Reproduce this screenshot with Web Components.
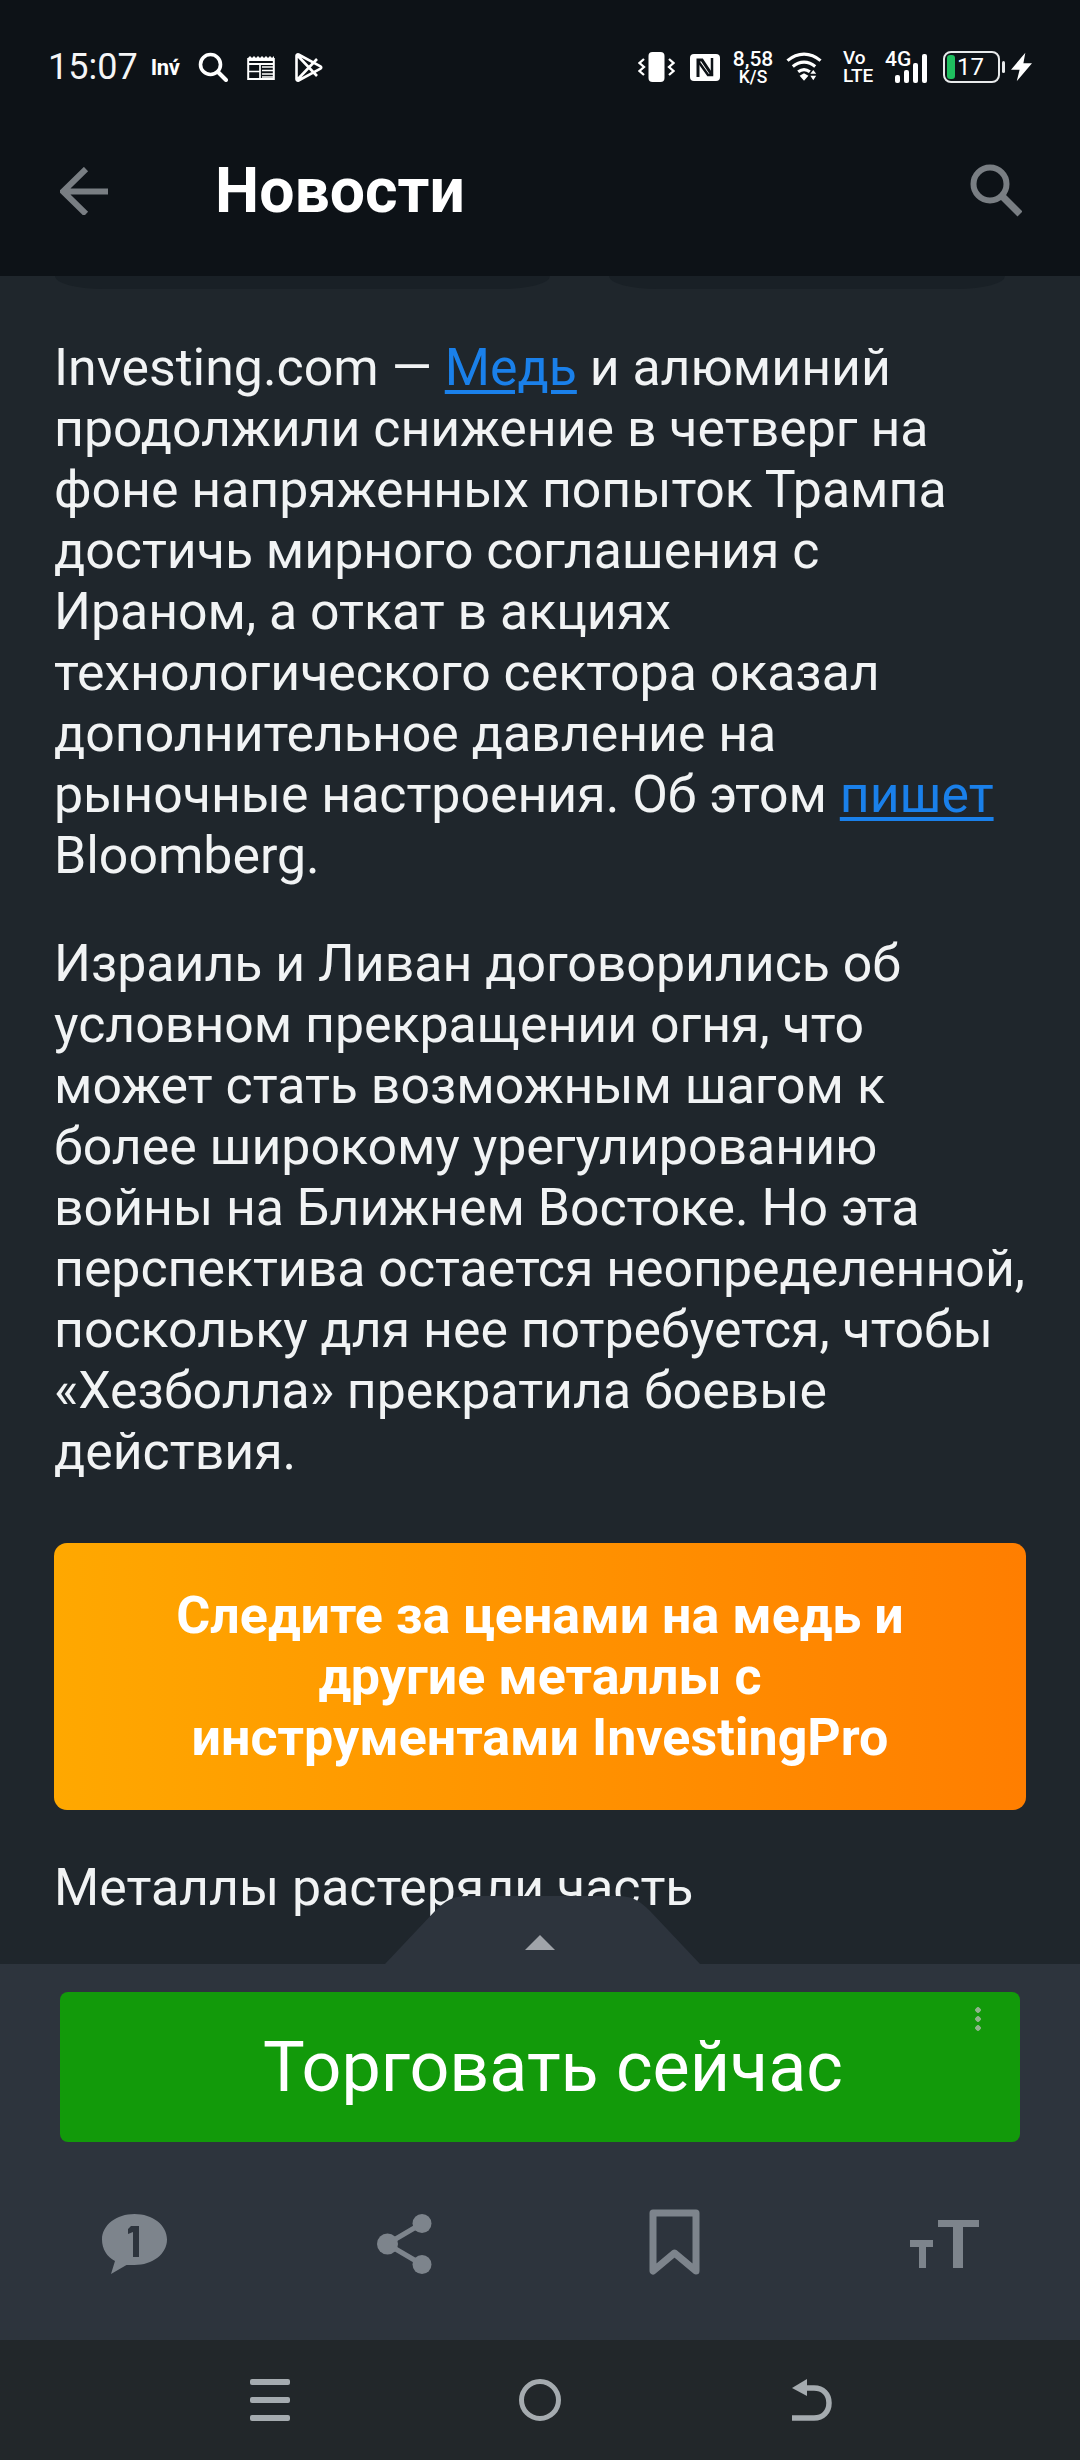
<!DOCTYPE html>
<html lang="ru">
<head>
<meta charset="utf-8">
<title>Новости</title>
<style>
  html, body { margin: 0; padding: 0; background: #1f262c; }
  body { width: 1080px; height: 2460px; overflow: hidden; font-family: Roboto, "Liberation Sans", sans-serif; }
  news-screen { height: 2460px; }
</style>
</head>
<body>
<news-screen>
  <status-bar slot="top"></status-bar>
  <app-header slot="top" title="Новости"></app-header>
  <article-body>
    <p>Investing.com — <news-link>Медь</news-link> и алюминий продолжили снижение в четверг на фоне напряженных попыток Трампа достичь мирного соглашения с Ираном, а откат в акциях технологического сектора оказал дополнительное давление на рыночные настроения. Об этом <news-link>пишет</news-link> Bloomberg.</p>
    <p>Израиль и Ливан договорились об условном прекращении огня, что может стать возможным шагом к более широкому урегулированию войны на Ближнем Востоке. Но эта перспектива остается неопределенной, поскольку для нее потребуется, чтобы «Хезболла» прекратила боевые действия.</p>
    <promo-banner>Следите за ценами на медь и другие металлы с инструментами InvestingPro</promo-banner>
    <p>Металлы растеряли часть</p>
  </article-body>
  <action-panel slot="bottom"></action-panel>
  <nav-bar slot="bottom"></nav-bar>
</news-screen>

<script>
function makeEl(name, css, html) {
  customElements.define(name, class extends HTMLElement {
    constructor() {
      super();
      this.attachShadow({ mode: "open" });
    }
    connectedCallback() {
      this.shadowRoot.innerHTML = "<style>" + css + "</style>" + html(this);
    }
  });
}

makeEl("news-screen", `
  :host { display: flex; flex-direction: column; width: 1080px; position: relative; overflow: hidden; background: #1f262c; }
  .mid { flex: 1; min-height: 0; overflow: hidden; }
`, () => `<slot name="top"></slot><div class="mid"><slot></slot></div><slot name="bottom"></slot>`);

makeEl("status-bar", `
  :host { display: flex; align-items: center; height: 132px; box-sizing: border-box; padding: 2px 48px 0 48px; background: #0d1217; color: #fff; font-family: Roboto, sans-serif; }
  .time { font-size: 36px; color: #f4f5f6; margin-right: 13px; }
  .inv { font-size: 22px; font-weight: 700; width: 31px; margin-right: 16px; letter-spacing: -.3px; white-space: nowrap; }
  svg { display: block; flex: none; }
  .left { display: flex; align-items: center; }
  .right { display: flex; align-items: center; margin-left: auto; }
  .stack { display: flex; flex-direction: column; align-items: center; font-weight: 500; line-height: 1; }
  .speed b { font-size: 21px; font-weight: 500; line-height: 20px; }
  .speed span { font-size: 17.5px; line-height: 16px; }
  .volte { font-size: 19px; line-height: 18px; }
  .volte span { align-self: flex-start; }
  .g { font-size: 21px; line-height: 1; font-weight: 500; position: absolute; left: 0; top: -2px; }
  .sig { position: relative; width: 42px; height: 32px; margin-right: 16px; }
  .bat { position: relative; width: 57px; height: 32px; box-sizing: border-box; border: 2px solid #e8eaeb; border-radius: 8px; font-size: 24px; line-height: 28px; padding-left: 12px; }
  .bat i { position: absolute; left: 2px; top: 2px; width: 8px; height: 24px; border-radius: 3px; background: #1fbf5f; }
`, () => `
  <div class="left">
    <span class="time">15:07</span>
    <span class="inv">Inv́</span>
    <svg width="30" height="30" viewBox="0 0 30 30" style="margin-right:19px"><circle cx="12.500" cy="12.500" r="10" fill="none" stroke="#fff" stroke-width="3.600"/><path d="M20 20l8 8" stroke="#fff" stroke-width="4" stroke-linecap="round"/></svg>
    <svg width="28" height="25" viewBox="0 0 28 25" style="margin-right:20px"><path d="M1 3l2-2 2 2 2-2 2 2 2-2 2 2 2-2 2 2 2-2 2 2 2-2 2 2 2-2v5H1z" fill="#fff"/><rect x="1.200" y="4" width="25.600" height="20" fill="none" stroke="#fff" stroke-width="2"/><path d="M1 9h26" stroke="#fff" stroke-width="2"/><path d="M15 12h11M15 15.500h11M15 19h11M15 22h11M13 10v14M2 16.500h11" stroke="#fff" stroke-width="1.700"/></svg>
    <svg width="28" height="31" viewBox="0 0 28 31"><path d="M3.500 2.500L25.500 14.300c1 .6 1 1.800 0 2.400L3.500 28.500c-1 .5-2-.1-2-1.200V3.700c0-1.100 1-1.700 2-1.200zM2 3l20 21M2 28l20-21" fill="none" stroke="#fff" stroke-width="2.600" stroke-linejoin="round"/></svg>
  </div>
  <div class="right">
    <svg width="37" height="30" viewBox="0 0 37 30" style="margin-right:15px"><rect x="10.500" y="0" width="16" height="30" rx="4" fill="#fff"/><path d="M6 7L1.500 11 6 15 1.500 19 6 23M31 7l4.500 4L31 15l4.500 4L31 23" fill="none" stroke="#fff" stroke-width="2.300"/></svg>
    <svg width="30" height="27" viewBox="0 0 30 27" style="margin-right:14px"><rect width="30" height="27" rx="4" fill="#fff"/><path d="M8 23V6h4l10 15" fill="none" stroke="#0d1217" stroke-width="3"/><path d="M22 4v17h-4L8 7" fill="none" stroke="#0d1217" stroke-width="2.500"/></svg>
    <div class="stack speed" style="width:38px;margin-right:14px"><b>8,58</b><span>K/S</span></div>
    <svg width="37" height="30" viewBox="0 0 38 30" style="margin-right:20px"><path d="M1.500 8.500C12 -.5 25 -.5 35.500 8.500M7 14.500c7-6 16-6 23 0M12.500 20c4-3 8-3 12 0" fill="none" stroke="#fff" stroke-width="3.200"/><path d="M14 24l4.500-2.500L23 24l-4.500 5zM28 18l3 4h-6zM25 24h6l-3 4.500z" fill="#fff"/></svg>
    <div class="stack volte" style="width:29px;margin-right:13px"><span>Vo</span><span>LTE</span></div>
    <div class="sig"><span class="g">4G</span><svg width="42" height="32" viewBox="0 0 42 32"><g fill="#fff"><rect x="10" y="24" width="5" height="8" rx="2"/><rect x="19" y="19" width="5" height="13" rx="2"/><rect x="28" y="12" width="5" height="20" rx="2"/><rect x="37" y="3" width="5" height="29" rx="2"/></g></svg></div>
    <div class="bat"><i></i>17</div>
    <svg width="3" height="12" viewBox="0 0 3 12" style="margin:0 6px 0 2px"><rect width="3" height="12" rx="1.500" fill="#e8eaeb"/></svg>
    <svg width="21" height="30" viewBox="0 0 22 30"><path d="M15 0L0 18h9l-3 12 16-19h-9z" fill="#fff"/></svg>
  </div>
`);

makeEl("app-header", `
  :host { display: flex; align-items: center; height: 144px; box-sizing: border-box; padding: 0 58px 26px 60px; background: #0d1217; color: #fff; position: relative; z-index: 2; }
  h1 { margin: 0 0 0 107px; font: 700 62.500px/1 Roboto, sans-serif; flex: 1; }
  svg { display: block; flex: none; }
  .curve { position: absolute; top: 100%; height: 13px; background: #192026; border-radius: 0 0 48px 48px / 0 0 13px 13px; }
`, (el) => `
  <svg width="48" height="48" viewBox="0 0 48 48"><path d="M26 2L3 24.500 26 47M3 24.500h45" fill="none" stroke="#797e83" stroke-width="6"/></svg>
  <h1>${el.getAttribute("title")}</h1>
  <svg width="52" height="54" viewBox="0 0 52 54"><circle cx="20" cy="20" r="16.500" fill="none" stroke="#797e83" stroke-width="6"/><path d="M32 32l18 18" stroke="#797e83" stroke-width="7"/></svg>
  <div class="curve" style="left:55px;width:495px"></div>
  <div class="curve" style="left:609px;width:396px"></div>
`);

makeEl("news-link", `
  :host { display: inline; color: #1a80ea; text-decoration: underline; text-decoration-thickness: 3.500px; text-underline-offset: 5px; }
`, () => `<slot></slot>`);

makeEl("article-body", `
  :host { display: block; box-sizing: border-box; padding: 61px 54px 0; color: #f1f3f4; font: 400 51.800px/61px Roboto, sans-serif; }
  ::slotted(p) { margin: 0 0 47px; }
  ::slotted(promo-banner) { margin: 61px 0 47px; }
`, () => `<slot></slot>`);

makeEl("promo-banner", `
  :host { display: flex; align-items: center; justify-content: center; box-sizing: border-box; height: 267px; padding: 0 100px; border-radius: 13px; background: linear-gradient(90deg, #ffa800, #ff7e00); color: #fff; font: 700 52px/61px Roboto, sans-serif; text-align: center; }
`, () => `<slot></slot>`);

makeEl("action-panel", `
  :host { display: block; position: relative; height: 376px; background: #2d343d; }
  .tab { position: absolute; left: 385px; bottom: 100%; display: block; }
  .arrow { position: absolute; left: 525px; top: -29px; width: 30px; height: 15px; background: #a0a4aa; clip-path: polygon(50% 0, 100% 100%, 0 100%); }
  .ad { position: absolute; left: 60px; top: 28px; width: 960px; height: 150px; border-radius: 8px; background: #129a0a; color: #fff; display: flex; align-items: center; justify-content: center; font: 400 70px/1 Roboto, sans-serif; padding: 0 0 0 26px; box-sizing: border-box; filter: blur(.7px); }
  .dots { position: absolute; right: 39px; top: 15px; width: 6px; height: 24px; background: radial-gradient(circle at 3px 3px, #8fb48c 2.500px, transparent 3px) 0 0/6px 9px; }
  .icons { position: absolute; left: 0; right: 0; top: 250px; height: 60px; }
  .icons svg { position: absolute; top: 0; display: block; }
`, () => `
  <svg class="tab" width="315" height="68" viewBox="0 0 315 68"><path d="M0 68L50 15C60 5 68 0 82 0H233C247 0 255 5 265 15L315 68Z" fill="#2d343d"/></svg>
  <div class="arrow"></div>
  <div class="ad">Торговать сейчас<span class="dots"></span></div>
  <div class="icons">
    <svg style="left:102px" width="65" height="60" viewBox="0 0 65 60"><path d="M32.500 0C50.500 0 65 11 65 25.500S50.500 51 32.500 51c-3 0-6 0-8 0L9 60l4-13C5 43 0 35 0 25.500 0 11 14.500 0 32.500 0z" fill="#7d848c"/><path d="M29 12h8v31h-6V18l-5 2v-5z" fill="#2d343d"/></svg>
    <svg style="left:377px" width="55" height="60" viewBox="0 0 55 60"><path d="M45 9.500L10 30l35 20.500" fill="none" stroke="#7d848c" stroke-width="5"/><circle cx="45" cy="9.500" r="9.500" fill="#7d848c"/><circle cx="10.500" cy="30" r="10.500" fill="#7d848c"/><circle cx="45" cy="50.500" r="9.500" fill="#7d848c"/></svg>
    <svg style="left:649px;top:-5px" width="51" height="68" viewBox="0 0 51 68"><path d="M4 4h43v58L25.500 44 4 62z" fill="none" stroke="#7d848c" stroke-width="7" stroke-linejoin="round"/></svg>
    <svg style="left:910px;top:6px" width="69" height="48" viewBox="0 0 69 48"><path d="M28 0h41v7H53v41H43V7H28zM0 20h23v7H16v21H9V27H0z" fill="#7d848c"/></svg>
  </div>
`);

makeEl("nav-bar", `
  :host { display: flex; align-items: center; justify-content: center; height: 120px; background: #22272a; position: relative; }
  svg { position: absolute; top: 39px; display: block; }
`, () => `
  <svg style="left:250px" width="40" height="42" viewBox="0 0 40 42"><g fill="#a5abaf"><rect width="40" height="6" rx="2"/><rect y="18" width="40" height="6" rx="2"/><rect y="36" width="40" height="6" rx="2"/></g></svg>
  <svg style="left:519px" width="42" height="42" viewBox="0 0 42 42"><circle cx="21" cy="21" r="18.500" fill="none" stroke="#a5abaf" stroke-width="5"/></svg>
  <svg style="left:792px" width="40" height="42" viewBox="0 0 40 42"><path d="M8 9h14c9 0 15 6 15 15s-6 15-15 15H0" fill="none" stroke="#a5abaf" stroke-width="5.500"/><path d="M15 0v17L0 9z" fill="#a5abaf"/></svg>
`);
</script>
</body>
</html>
